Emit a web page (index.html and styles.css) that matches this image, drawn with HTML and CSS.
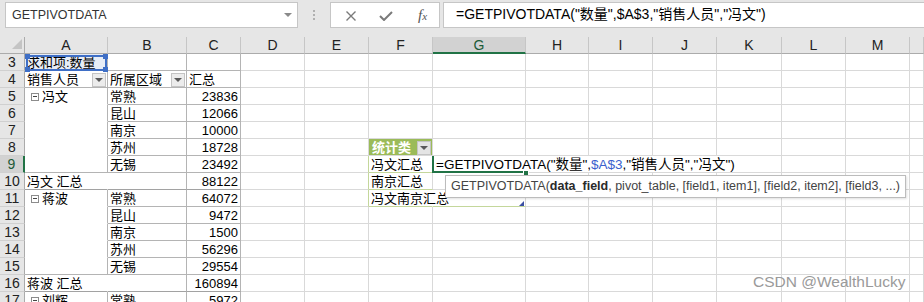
FILE: index.html
```html
<!DOCTYPE html>
<html lang="zh-CN">
<head>
  <meta charset="UTF-8">
  <meta name="viewport" content="width=device-width, initial-scale=1.0">
  <title>GETPIVOTDATA</title>
  <link rel="stylesheet" href="styles.css">
</head>
<body>
  <div class="formula-bar">
    <div class="name-box">
      <span>GETPIVOTDATA</span>
      <span class="name-caret"></span>
    </div>
    <div class="grip"><i></i><i></i><i></i></div>
    <div class="fx-buttons">
      <svg class="icon-x" width="10" height="10" viewBox="0 0 10 10">
        <path d="M0.5 0.5 L9.5 9.5 M9.5 0.5 L0.5 9.5" stroke="#7a7a7a" stroke-width="1.4" fill="none"/>
      </svg>
      <svg class="icon-check" width="14" height="10" viewBox="0 0 14 10">
        <path d="M1 5 L5 9 L13 1" stroke="#7a7a7a" stroke-width="2" fill="none"/>
      </svg>
      <span class="fx">f<span>x</span></span>
    </div>
    <div class="formula-input">=GETPIVOTDATA("数量",$A$3,"销售人员","冯文")</div>
  </div>

  <div class="sheet" id="sheet"></div>

  <div class="tooltip">GETPIVOTDATA(<b>data_field</b>, pivot_table, [field1, item1], [field2, item2], [field3, ...)</div>
  <div class="watermark">CSDN @WealthLucky</div>

  <script>
    const sheet = document.getElementById('sheet');
    const letters = ['A','B','C','D','E','F','G','H','I','J','K','L','M','N'];

    const editorHtml =
      '<span class="edit-text">=GETPIVOTDATA("数量",<span class="ref-a">$A$3</span>,"销售人员","冯文")</span>' +
      '<span class="fill-handle"></span>';

    // row -> column -> [text, classes]
    const data = {
      3:  { A: ['求和项:数量', 'pv ref'], B: ['', 'pv'], C: ['', 'pv'] },
      4:  { A: ['销售人员', 'pv drop'], B: ['所属区域', 'pv drop'], C: ['汇总', 'pv'] },
      5:  { A: ['冯文', 'pv grp grp-head'], B: ['常熟', 'pv'], C: ['23836', 'pv num'] },
      6:  { A: ['', 'pv grp'], B: ['昆山', 'pv'], C: ['12066', 'pv num'] },
      7:  { A: ['', 'pv grp'], B: ['南京', 'pv'], C: ['10000', 'pv num'] },
      8:  { A: ['', 'pv grp'], B: ['苏州', 'pv'], C: ['18728', 'pv num'], F: ['统计类', 'tbl-head drop'] },
      9:  { A: ['', 'pv'], B: ['无锡', 'pv'], C: ['23492', 'pv num'], E: ['', 'tbl-edge'], F: ['冯文汇总', 'tbl'], G: ['', 'editor'] },
      10: { A: ['冯文 汇总', 'pv total span'], B: ['', 'pv total'], C: ['88122', 'pv total num'], E: ['', 'tbl-edge'], F: ['南京汇总', 'tbl'] },
      11: { A: ['蒋波', 'pv grp grp-head'], B: ['常熟', 'pv'], C: ['64072', 'pv num'], E: ['', 'tbl-edge'], F: ['冯文南京汇总', 'tbl span'], G: ['', 'tbl tbl-end'] },
      12: { A: ['', 'pv grp'], B: ['昆山', 'pv'], C: ['9472', 'pv num'] },
      13: { A: ['', 'pv grp'], B: ['南京', 'pv'], C: ['1500', 'pv num'] },
      14: { A: ['', 'pv grp'], B: ['苏州', 'pv'], C: ['56296', 'pv num'] },
      15: { A: ['', 'pv'], B: ['无锡', 'pv'], C: ['29554', 'pv num'] },
      16: { A: ['蒋波 汇总', 'pv total span'], B: ['', 'pv total'], C: ['160894', 'pv total num'] },
      17: { A: ['刘辉', 'pv grp grp-head'], B: ['常熟', 'pv'], C: ['5972', 'pv num'] }
    };

    function addCell(cls, html) {
      const el = document.createElement('div');
      el.className = cls;
      el.innerHTML = html;
      sheet.appendChild(el);
    }

    addCell('corner', '<span class="corner-tri"></span>');
    letters.forEach(l => {
      addCell('col-head' + (l === 'G' ? ' active' : ''), l === 'N' ? '' : l);
    });

    for (let r = 3; r <= 17; r++) {
      addCell('row-head' + (r === 9 ? ' active' : ''), r);
      letters.forEach(l => {
        const [text, cls] = (data[r] && data[r][l]) || ['', ''];
        const has = name => cls.split(' ').includes(name);
        let html = '';
        if (has('grp-head')) html += '<span class="toggle"></span>';
        html += `<span class="txt">${text}</span>`;
        if (has('drop')) html += '<span class="drop-btn"></span>';
        if (has('ref')) html += '<span class="ref-box"><i class="h tl"></i><i class="h tr"></i><i class="h bl"></i><i class="h br"></i></span>';
        if (has('editor')) html = editorHtml;
        if (has('tbl-end')) html += '<span class="tbl-corner"></span>';
        addCell('cell ' + cls, html);
      });
    }
  </script>
</body>
</html>
```

FILE: styles.css
```css
* {
  box-sizing: border-box;
}
body {
  margin: 0;
  width: 924px;
  height: 302px;
  overflow: hidden;
  position: relative;
  background: #fff;
  color: #000;
  font-family: "Liberation Sans", "Noto Sans CJK SC", sans-serif;
}

/* formula bar */
.formula-bar {
  display: flex;
  height: 37px;
  padding: 2px 0 0 5px;
  background: #e6e6e6;
}
.name-box {
  width: 293px;
  height: 26px;
  display: flex;
  align-items: center;
  justify-content: space-between;
  padding: 0 5px 0 6px;
  background: #fff;
  border: 1px solid #c6c6c6;
  font-size: 12.5px;
  color: #333;
}
.name-caret {
  border-left: 4px solid transparent;
  border-right: 4px solid transparent;
  border-top: 4px solid #8a8a8a;
}
.grip {
  width: 32px;
  height: 26px;
  display: flex;
  flex-direction: column;
  align-items: center;
  justify-content: center;
  gap: 2px;
}
.grip i {
  width: 2px;
  height: 2px;
  background: #b0b0b0;
}
.fx-buttons {
  width: 110px;
  height: 26px;
  display: flex;
  align-items: center;
  padding-left: 15px;
  background: #fff;
  border: 1px solid #c6c6c6;
}
.icon-x {
  margin-top: 1px;
}
.icon-check {
  margin-left: 23px;
  margin-top: 1px;
}
.fx {
  margin-left: 25px;
  font-family: "Liberation Serif", serif;
  font-style: italic;
  font-size: 15px;
  color: #555;
}
.fx span {
  font-size: 11px;
}
.formula-input {
  flex: 1;
  height: 26px;
  margin-left: 3px;
  padding-left: 12px;
  background: #fff;
  border: 1px solid #c6c6c6;
  border-right: none;
  font-size: 14px;
  line-height: 23px;
  white-space: nowrap;
}

/* sheet grid */
.sheet {
  display: grid;
  grid-template-columns: 25px 83px 79px 54px 64px 64px 64px 93px 63px 64px 64px 65px 64px 64px 14px;
  grid-auto-rows: 17px;
}
.corner {
  display: flex;
  align-items: flex-end;
  justify-content: flex-end;
  padding: 0 2px 4px 0;
  background: #e6e6e6;
  border-right: 1px solid #ababab;
  border-bottom: 1px solid #ababab;
}
.corner-tri {
  border-left: 10px solid transparent;
  border-bottom: 10px solid #c4c4c4;
}
.col-head {
  background: #e6e6e6;
  border-right: 1px solid #c6c6c6;
  border-bottom: 1px solid #ababab;
  text-align: center;
  font-size: 14px;
  line-height: 16px;
  color: #222;
}
.col-head.active {
  background: #d2d2d2;
  border-bottom: 2px solid #217346;
  color: #1c5a38;
}
.row-head {
  background: #e6e6e6;
  border-right: 1px solid #ababab;
  border-bottom: 1px solid #d0d0d0;
  text-align: center;
  font-size: 14px;
  line-height: 17px;
  color: #222;
}
.row-head.active {
  background: #d2d2d2;
  border-right: 2px solid #217346;
  color: #1c5a38;
}

.cell {
  display: flex;
  align-items: center;
  padding: 1px 2px 0;
  border-right: 1px solid #d9d9d9;
  border-bottom: 1px solid #d9d9d9;
  font-size: 13px;
  line-height: 16px;
  white-space: nowrap;
}

/* pivot table */
.pv {
  border-right-color: #b4b4b4;
  border-bottom-color: #b4b4b4;
}
.grp {
  border-bottom-color: transparent;
}
.span {
  border-right-color: transparent;
}
.total {
  border-bottom-color: #a2a2a2;
}
.num {
  justify-content: flex-end;
}
.drop {
  justify-content: space-between;
  padding-right: 1px;
}
.drop-btn {
  width: 14px;
  height: 14px;
  flex: none;
  display: flex;
  align-items: center;
  justify-content: center;
  background: #ececec;
  border: 1px solid #c4c4c4;
}
.drop-btn::after {
  content: "";
  border-left: 4px solid transparent;
  border-right: 4px solid transparent;
  border-top: 4px solid #595959;
}
.toggle {
  position: relative;
  width: 8px;
  height: 8px;
  flex: none;
  margin: 0 3px 0 4px;
  border: 1px solid #8c8c8c;
}
.toggle::after {
  content: "";
  position: absolute;
  left: 1px;
  right: 1px;
  top: 2px;
  height: 1px;
  background: #444;
}
.ref {
  position: relative;
  background: #e7edf6;
}
.ref-box {
  position: absolute;
  left: 1px;
  top: 1px;
  right: 0;
  bottom: -1px;
  border: 2px solid #3f6fc6;
  z-index: 1;
}
.ref-box .h {
  position: absolute;
  width: 5px;
  height: 5px;
  background: #3f6fc6;
}
.ref-box .tl { left: -3px; top: -3px; }
.ref-box .tr { right: -3px; top: -3px; }
.ref-box .bl { left: -3px; bottom: -3px; }
.ref-box .br { right: -3px; bottom: -3px; }

/* small table in F8:G11 */
.tbl-head {
  background: #9bbb59;
  color: #fff;
  font-weight: bold;
  padding-left: 3px;
}
.tbl-head .drop-btn {
  background: #e4e4e4;
}
.tbl {
  border-bottom-color: #c4d79b;
}
.tbl-edge {
  border-right-color: #c4d79b;
}
.tbl-end {
  position: relative;
}
.tbl-corner {
  position: absolute;
  right: 1px;
  bottom: 0;
  border-left: 5px solid transparent;
  border-bottom: 5px solid #3b4fa3;
}

/* in-cell editor G9 */
.editor {
  position: relative;
}
.editor::before {
  content: "";
  position: absolute;
  left: -1px;
  top: 0;
  bottom: -1px;
  width: 2px;
  background: #217346;
  z-index: 3;
}
.editor::after {
  content: "";
  position: absolute;
  left: -1px;
  right: -1px;
  bottom: -1px;
  height: 2px;
  background: #217346;
  z-index: 3;
}
.edit-text {
  position: absolute;
  left: 1px;
  top: 0;
  height: 16px;
  padding: 1px 4px 0 2px;
  background: #fff;
  font-size: 13.5px;
  line-height: 15px;
  z-index: 2;
}
.ref-a {
  color: #3a5fcd;
}
.fill-handle {
  position: absolute;
  right: -4px;
  bottom: -4px;
  width: 6px;
  height: 6px;
  background: #217346;
  border: 1px solid #fff;
  z-index: 4;
}

/* overlays */
.tooltip {
  position: absolute;
  left: 445px;
  top: 175px;
  height: 23px;
  padding: 0 5px;
  background: #fff;
  border: 1px solid #bcbcbc;
  box-shadow: 1px 1px 2px rgba(0, 0, 0, 0.12);
  font-size: 12.5px;
  line-height: 21px;
  color: #444;
  white-space: nowrap;
  z-index: 5;
}
.tooltip b {
  color: #2a2a2a;
}
.watermark {
  position: absolute;
  left: 753px;
  top: 273px;
  font-size: 15.5px;
  color: #9a9a9a;
  z-index: 5;
}
```
